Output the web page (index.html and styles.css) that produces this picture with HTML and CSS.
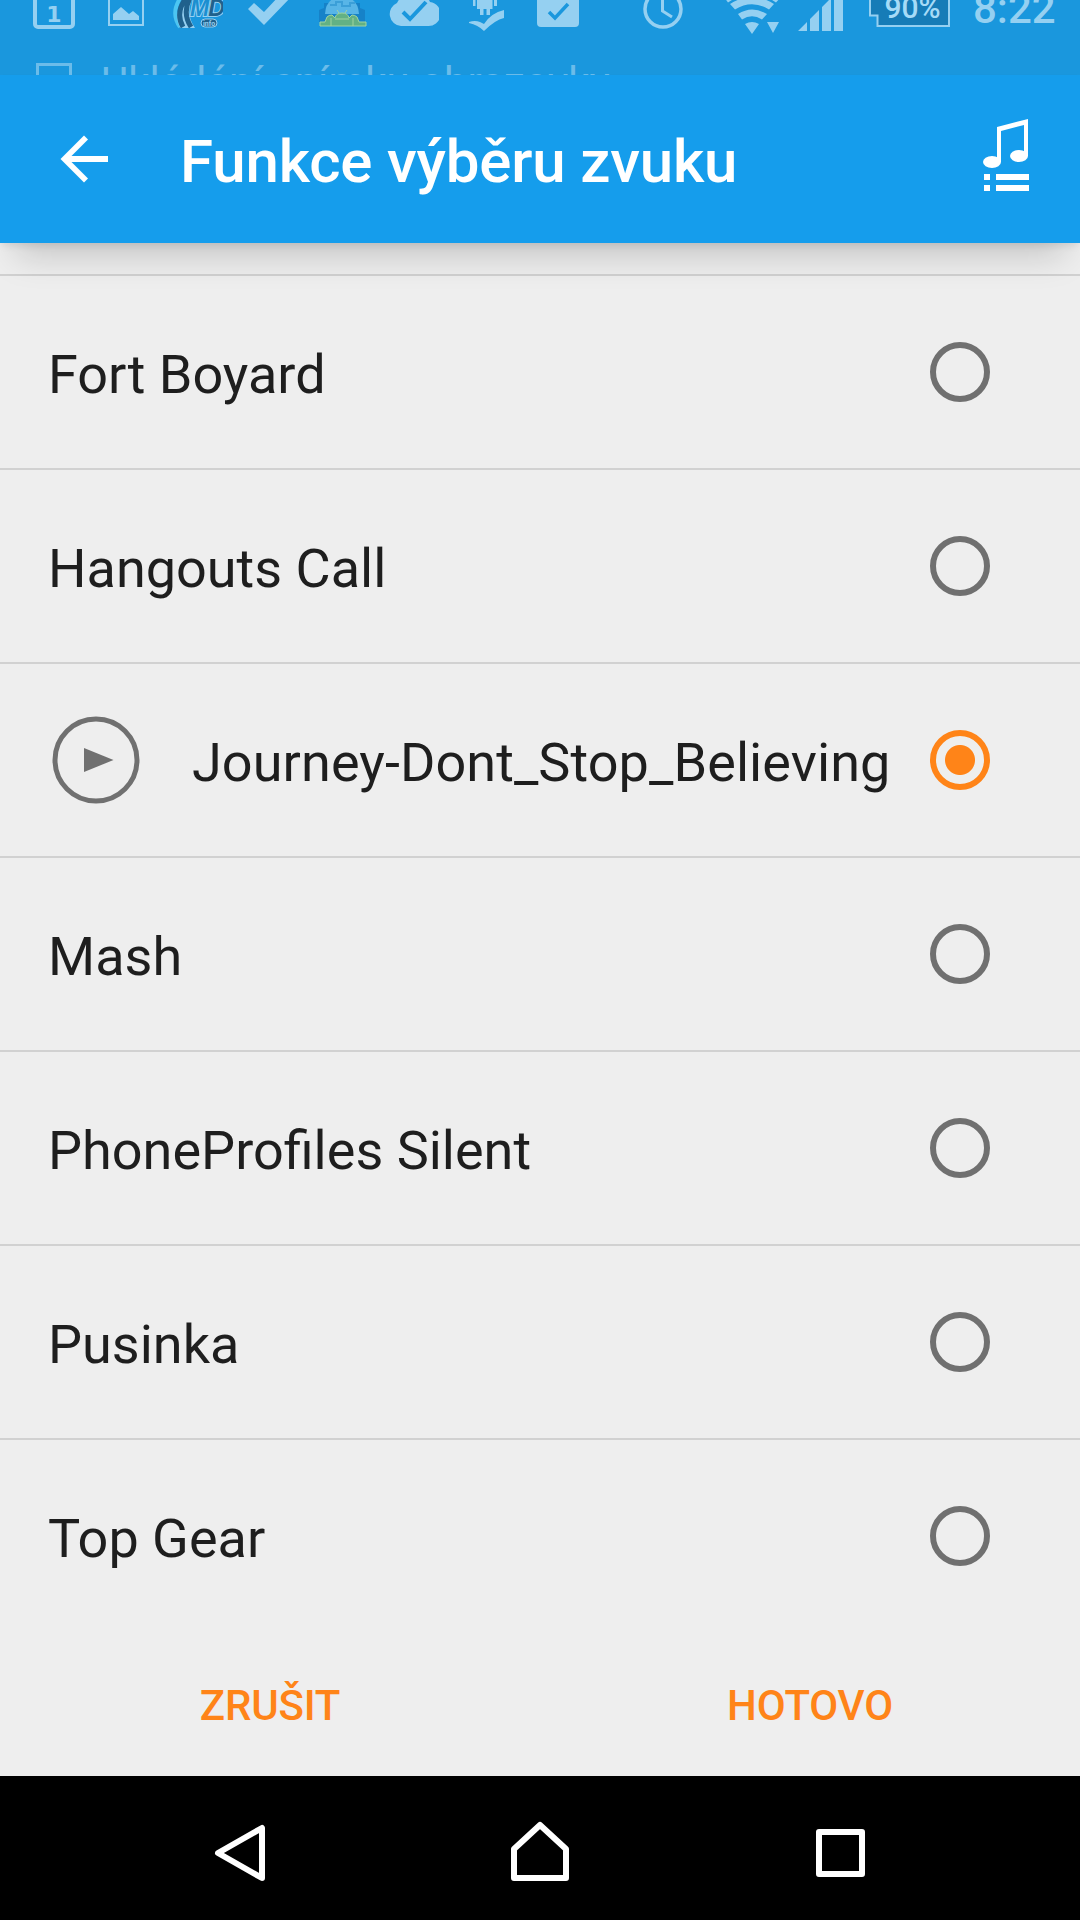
FILE: index.html
```html
<!DOCTYPE html>
<html lang="cs">
<head>
    <meta charset="UTF-8">
    <meta name="viewport" content="width=device-width, initial-scale=1.0">
    <title>Funkce výběru zvuku</title>
    <link rel="stylesheet" href="styles.css">
</head>
<body>
    <div class="screen">
        <div class="status-bar">
            <div class="status-icons">
                <svg class="icon calendar" width="42" height="36" viewBox="33 0 42 36">
                    <rect x="35" y="-10" width="38" height="37" rx="3" fill="none" stroke="#95d0f1" stroke-width="4"/>
                    <text class="calendar-day" x="54" y="21.500" text-anchor="middle">1</text>
                </svg>
                <svg class="icon picture" width="36" height="36" viewBox="108 0 36 36">
                    <path d="M109 -4V25H143V-4" fill="none" stroke="#95d0f1" stroke-width="2"/>
                    <path d="M113 20V14L121 7L129 14L133 11L139 16V20Z"/>
                </svg>
                <svg class="icon md" width="50" height="36" viewBox="173 0 50 36">
                    <path d="M181 -3Q170 13 180 27" fill="none" stroke="#4cc5f2" stroke-width="4"/>
                    <path d="M187 -3Q172 12 180 28H195Q185 14 193 -3Z" fill="#95d0f1"/>
                    <path d="M186 -2Q175 13 183 27M190 -2Q182 13 191 27" fill="none" stroke="#20618c" stroke-width="5"/>
                    <text class="md-letters" x="190" y="16"><tspan fill="#1b8fd0">M</tspan><tspan fill="#20618c">D</tspan></text>
                    <rect x="201" y="19" width="16" height="8" rx="4" fill="#20618c" stroke="#95d0f1"/>
                    <text class="md-info" x="209" y="26" text-anchor="middle">info</text>
                </svg>
                <svg class="icon check" width="42" height="36" viewBox="248 0 42 36">
                    <path d="M248 9L254 3L264 12L279 -4H292L264 25Z"/>
                </svg>
                <svg class="icon droids" width="49" height="36" viewBox="318 0 49 36">
                    <path d="M319 22V10L324 8V3H360V8L365 10V22Z" fill="#1682c8"/>
                    <path d="M325 14Q326 -3 342 -3T359 14Z" fill="#58b5e7"/>
                    <path d="M330 5H336V2H342V6H350V3H355" fill="none" stroke="#3b9fd8" stroke-width="2"/>
                    <path d="M320 26V22H325L327 17Q329 15 332 15L335 18Q336 13 342 13T349 18L352 15Q355 15 357 17L359 22H366V26Z" fill="#63b184" stroke="#a1d49f" stroke-width="1"/>
                    <path d="M331 26V18M353 26V18M335 19H349M337 10L339 13M347 10L345 13" stroke="#a1d49f" stroke-width="1"/>
                </svg>
                <svg class="icon cloud" width="50" height="36" viewBox="389 0 50 36">
                    <path d="M401 26A12 12 0 0 1 397 3Q401 -6 413 -6Q427 -6 430 2A12 12 0 0 1 427 26Z"/>
                    <path d="M403 12L410 19L426 2" fill="none" stroke="#1a97dd" stroke-width="4"/>
                </svg>
                <svg class="icon droid-check" width="36" height="36" viewBox="469 0 36 36">
                    <path d="M473 -3H475.500V6H473ZM494 -3H497V6H494ZM477 -3H492.500V9H490V15H486.500V9H483.500V15H480V9H477Z"/>
                    <path d="M469 22Q475 20 480 22L484 24Q491 13 504 10V18Q495 20 484 31Q478 25 469 23Z"/>
                </svg>
                <svg class="icon checkbox" width="42" height="36" viewBox="537 0 42 36">
                    <path d="M537 -4H579V23Q579 27 575 27H541Q537 27 537 23Z"/>
                    <path d="M549 12L555 18L568 4" fill="none" stroke="#1a97dd" stroke-width="3.5"/>
                </svg>
                <svg class="icon clock" width="40" height="36" viewBox="643 0 40 36">
                    <g fill="none" stroke="#95d0f1">
                        <circle cx="663" cy="9" r="18" stroke-width="3.5"/>
                        <path d="M662.500 -4V11L672 17" stroke-width="3"/>
                    </g>
                </svg>
                <svg class="icon wifi" width="56" height="36" viewBox="724 0 56 36">
                    <path d="M745 24Q752 20 759 24L752 34ZM738 14L742 19.500Q752 13 762 19.500L767 14Q752 5 738 14ZM730 4L735 9.500Q752 -1 769 9.500L774 4Q752 -10 730 4ZM724 -3L728 2.500Q752 -14 776 2.500L781 -3ZM767 22H779L773 33Z"/>
                </svg>
                <svg class="icon signal" width="46" height="36" viewBox="798 0 46 36">
                    <path d="M798 31L807 22V31ZM810 31V19L819 10V31ZM822 31V7L831 -2V31ZM834 -2H843V31H834Z"/>
                </svg>
                <svg class="icon battery" width="82" height="36" viewBox="869 0 82 36">
                    <path d="M870 -3V15.500H877.500V26H949V-3" fill="#167cb7" stroke="#95d0f1" stroke-width="2"/>
                    <text class="battery-level" x="884.500" y="18">90%</text>
                </svg>
                <div class="time">8:22</div>
            </div>
            <div class="behind">
                <div class="behind-box"></div>
                <div class="behind-text">Ukládání snímku obrazovky</div>
            </div>
        </div>

        <div class="toolbar">
            <svg class="back" width="48" height="48" viewBox="0 0 48 48">
                <path d="M48 21H11.500L28 4.500L24 0.500L0.500 24L24 47.500L28 43.500L11.500 27H48Z" fill="#fff"/>
            </svg>
            <h1 class="title">Funkce výběru zvuku</h1>
            <svg class="playlist" width="48" height="74" viewBox="0 0 48 74">
                <g fill="#fff">
                    <path d="M15 9L46 1V38H42V7L19 13V44H15Z"/>
                    <ellipse cx="10" cy="44" rx="9" ry="6"/>
                    <ellipse cx="37" cy="38" rx="9" ry="6"/>
                    <path d="M2 56H8V62H2ZM14 56H47V62H14ZM2 67H8V73H2ZM14 67H47V73H14Z"/>
                </g>
            </svg>
        </div>

        <div class="list">
            <div class="row"><span class="name">Fort Boyard</span><span class="radio"></span></div>
            <div class="row"><span class="name">Hangouts Call</span><span class="radio"></span></div>
            <div class="row">
                <svg class="play" width="88" height="88" viewBox="0 0 88 88">
                    <circle cx="44" cy="44" r="41" fill="none" stroke="#707070" stroke-width="5"/>
                    <path d="M32 32L61.500 44L32 56Z" fill="#707070"/>
                </svg>
                <span class="name playing">Journey-Dont_Stop_Believing</span>
                <span class="radio checked"></span>
            </div>
            <div class="row"><span class="name">Mash</span><span class="radio"></span></div>
            <div class="row"><span class="name">PhoneProfiles Silent</span><span class="radio"></span></div>
            <div class="row"><span class="name">Pusinka</span><span class="radio"></span></div>
            <div class="row"><span class="name">Top Gear</span><span class="radio"></span></div>
        </div>

        <div class="buttons">
            <button>ZRUŠIT</button>
            <button>HOTOVO</button>
        </div>

        <div class="nav-bar">
            <svg width="60" height="64" viewBox="0 0 60 64">
                <path d="M52 7V57L8 32Z"/>
            </svg>
            <svg width="60" height="64" viewBox="0 0 60 64">
                <path d="M4 28L30 4L56 28V57H4Z"/>
            </svg>
            <svg width="60" height="64" viewBox="0 0 60 64">
                <path d="M9 11H52V53H9Z"/>
            </svg>
        </div>
    </div>
</body>
</html>
```

FILE: styles.css
```css
body {
    margin: 0;
    background-color: #000000;
    font-family: Roboto, sans-serif;
}
.screen {
    display: flex;
    flex-direction: column;
    width: 1080px;
    height: 1920px;
    overflow: hidden;
    background-color: #eeeeee;
}

/* status bar */
.status-bar {
    flex: none;
    height: 75px;
    overflow: hidden;
    background-color: #1a97dd;
}
.status-icons {
    display: flex;
    height: 36px;
    padding-left: 33px;
}
.icon {
    flex: none;
    fill: #95d0f1;
}
.picture { margin-left: 33px; }
.md { margin-left: 29px; }
.check { margin-left: 25px; }
.droids { margin-left: 28px; }
.cloud { margin-left: 22px; }
.droid-check { margin-left: 30px; }
.checkbox { margin-left: 32px; }
.clock { margin-left: 64px; }
.wifi { margin-left: 41px; }
.signal { margin-left: 18px; }
.battery { margin-left: 25px; }
.calendar-day {
    font-family: "DejaVu Sans", sans-serif;
    font-size: 22px;
    font-weight: bold;
}
.md-letters {
    font-family: "Liberation Sans", sans-serif;
    font-size: 23px;
    font-weight: bold;
    font-style: italic;
    stroke: #95d0f1;
    stroke-width: 2px;
    paint-order: stroke;
    letter-spacing: -1px;
}
.md-info {
    font-size: 7px;
    font-weight: bold;
}
.battery-level {
    font-size: 30px;
    font-weight: 500;
    fill: #a5dbf7;
}
.time {
    margin-left: 22px;
    margin-top: -18px;
    font-size: 42px;
    font-weight: 500;
    line-height: 54px;
    color: #95d0f1;
}
.behind {
    display: flex;
    padding: 27px 0 0 36px;
    color: #6bbcea;
}
.behind-box {
    box-sizing: border-box;
    width: 36px;
    height: 36px;
    border: 3px solid #6bbcea;
}
.behind-text {
    margin-left: 29px;
    margin-top: -4px;
    font-size: 42px;
    line-height: 48px;
    white-space: nowrap;
}

/* toolbar */
.toolbar {
    position: relative;
    flex: none;
    display: flex;
    align-items: center;
    box-sizing: border-box;
    height: 168px;
    padding: 0 50px 0 60px;
    background-color: #159dec;
    box-shadow: 0 29px 32px -16px rgba(0, 0, 0, 0.17), 0 4px 8px -2px rgba(0, 0, 0, 0.1);
}
.title {
    flex: 1;
    margin: 4px 0 0 72px;
    font-size: 60px;
    font-weight: 500;
    letter-spacing: -0.18px;
    color: #ffffff;
}
.playlist {
    margin-bottom: 8px;
}

/* ringtone list */
.list {
    flex: none;
    padding-top: 31px;
}
.row {
    display: flex;
    align-items: center;
    box-sizing: border-box;
    height: 194px;
    padding: 0 90px 0 48px;
    border-top: 2px solid #d1d1d1;
}
.name {
    flex: 1;
    padding-top: 4px;
    font-size: 54px;
    color: #1e1e1e;
    white-space: nowrap;
}
.playing {
    letter-spacing: 0.08px;
}
.play {
    flex: none;
    margin: 0 52px 0 4px;
}
.radio {
    flex: none;
    box-sizing: border-box;
    width: 60px;
    height: 60px;
    border: 6px solid #707070;
    border-radius: 50%;
}
.radio.checked {
    border-color: #ff8418;
    background: radial-gradient(circle, #ff8418 14.5px, transparent 15.5px);
}

/* dialog buttons */
.buttons {
    flex: 1;
    display: flex;
}
button {
    flex: 1;
    padding: 2px 0 0;
    border: none;
    background: none;
    font-family: inherit;
    font-size: 42px;
    font-weight: 500;
    letter-spacing: -0.2px;
    color: #ff8418;
    cursor: pointer;
}

/* navigation bar */
.nav-bar {
    flex: none;
    display: flex;
    justify-content: space-around;
    box-sizing: border-box;
    height: 144px;
    padding: 45px 90px 0;
    background-color: #000000;
}
.nav-bar svg {
    fill: none;
    stroke: #ffffff;
    stroke-width: 6;
    stroke-linejoin: round;
}
```
